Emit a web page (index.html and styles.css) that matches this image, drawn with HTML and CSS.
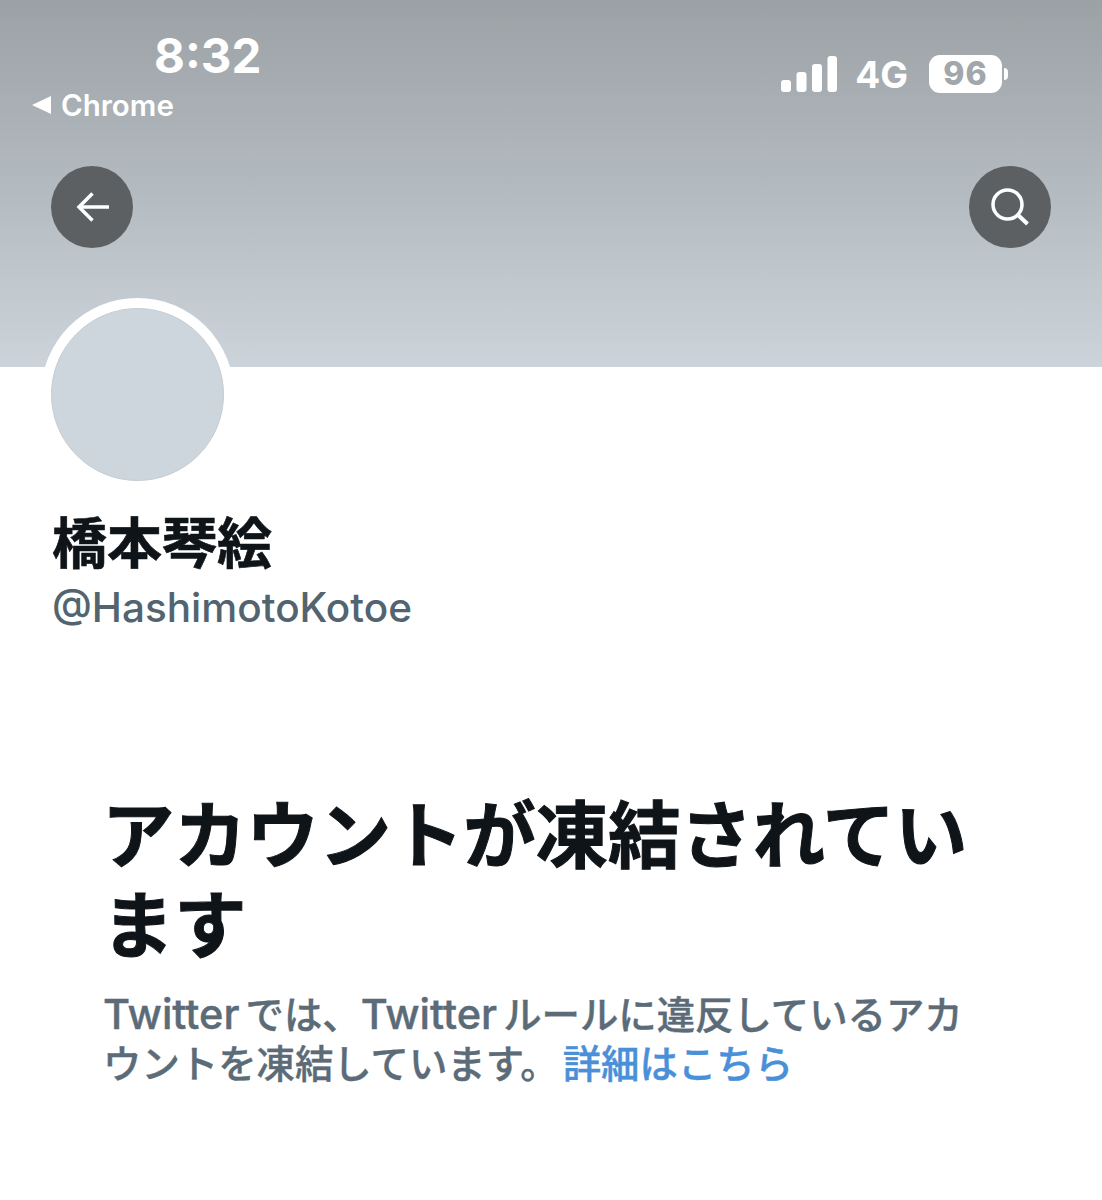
FILE: index.html
```html
<!DOCTYPE html>
<html lang="ja">
<head>
<meta charset="utf-8">
<title>橋本琴絵 (@HashimotoKotoe)</title>
<link rel="stylesheet" href="styles.css">
</head>
<body>
<header class="banner">
  <div class="status">
    <div class="status-left">
      <div class="time">8:32</div>
      <div class="return"><span class="tri"></span><span>Chrome</span></div>
    </div>
    <div class="status-right">
      <svg class="signal" width="56" height="36" viewBox="0 0 56 36"><rect x="0" y="24" width="10" height="12" rx="3"/><rect x="15.500" y="16" width="10" height="20" rx="3"/><rect x="31" y="8" width="10" height="28" rx="3"/><rect x="46.500" y="0" width="9.500" height="36" rx="3"/></svg>
      <span class="net">4G</span>
      <div class="battery"><div class="batt-body">96</div><div class="batt-cap"></div></div>
    </div>
  </div>
  <div class="nav">
    <button class="round" aria-label="戻る">
      <svg width="36" height="36" viewBox="0 0 36 36" fill="none" stroke="#fff" stroke-width="3.500"><path d="M35 18H5"/><path d="M18.500 4.500 5 18l13.500 13.500"/></svg>
    </button>
    <button class="round" aria-label="検索">
      <svg width="40" height="40" viewBox="0 0 40 40" fill="none" stroke="#fff" stroke-width="3.500"><circle cx="17.500" cy="17.500" r="14.500"/><path d="M28 28 37.500 37" stroke-width="4"/></svg>
    </button>
  </div>
</header>
<main class="profile">
  <div class="avatar-ring"><div class="avatar"></div></div>
  <h1 class="name">橋本琴絵</h1>
  <div class="handle">@HashimotoKotoe</div>
  <section class="notice">
    <h2 class="notice-title">アカウントが凍結されています</h2>
    <p class="notice-body"><span class="latin">Twitter</span>では、<span class="latin">Twitter</span>ルールに違反しているアカウントを凍結しています。<a class="link" href="#">詳細はこちら</a></p>
  </section>
</main>
</body>
</html>
```
FILE: styles.css
```css
* { box-sizing: border-box; }
html, body { margin: 0; padding: 0; background: #fff; }
body {
  width: 1102px;
  height: 1200px;
  overflow: hidden;
  font-family: "Inter", "Noto Sans CJK JP", sans-serif;
}
.banner {
  height: 367px;
  background: linear-gradient(180deg, #9ba1a5 0%, #b3babf 50%, #ccd3da 100%);
  padding: 34px 51px 0 32px;
}
.status {
  display: flex;
  justify-content: space-between;
  height: 132px;
}
.status-left { display: flex; flex-direction: column; }
.time {
  color: #fff;
  font-size: 47.500px;
  font-weight: 700;
  line-height: 44px;
  margin-left: 122px;
}
.return {
  display: flex;
  align-items: center;
  gap: 10px;
  color: #fff;
  font-size: 29.500px;
  font-weight: 600;
  line-height: 34px;
  margin-top: 10px;
}
.tri {
  width: 0;
  height: 0;
  border-style: solid;
  border-width: 9px 19px 9px 0;
  border-color: transparent #fff transparent transparent;
}
.status-right {
  display: flex;
  align-items: flex-start;
  gap: 19px;
  padding-top: 21px;
  margin-right: 43px;
  height: 70px;
}
.signal { fill: #fff; margin-top: 1px; margin-right: -1px; }
.net { color: #fff; font-size: 37px; font-weight: 700; line-height: 40px; margin-right: 2px; }
.battery { display: flex; align-items: center; gap: 2px; }
.batt-body {
  width: 73px;
  height: 38px;
  background: #fff;
  border-radius: 11px;
  color: #a1a7ab;
  font-size: 32px;
  font-weight: 800;
  line-height: 38px;
  text-align: center;
  letter-spacing: 1px;
}
.batt-cap { width: 4px; height: 12px; background: #fff; border-radius: 0 4px 4px 0; }
.nav {
  display: flex;
  justify-content: space-between;
  padding-left: 19px;
}
.round {
  width: 82px;
  height: 82px;
  border: 0;
  border-radius: 50%;
  background: #5c6063;
  padding: 0;
  display: flex;
  align-items: center;
  justify-content: center;
}
.profile { padding: 0 52px; }
.avatar-ring {
  width: 193px;
  height: 193px;
  margin: -69px 0 0 -11px;
  padding: 10px;
  border-radius: 50%;
  background: #fff;
}
.avatar {
  width: 173px;
  height: 173px;
  border-radius: 50%;
  background: #ced6dd;
  border: 1px solid #c5ccd2;
}
.name {
  margin: 15px 0 0;
  font-size: 55px;
  font-weight: 700;
  -webkit-text-stroke: 0.600px #0f1419;
  line-height: 74px;
  color: #0f1419;
}
.handle {
  font-size: 40.500px;
  line-height: 50px;
  margin-top: 3px;
  color: #536471;
  font-weight: 500;
}
.notice { padding: 0 0 0 50px; margin-top: 158px; width: 930px; }
.notice-title {
  margin: 0;
  font-size: 72.300px;
  font-weight: 700;
  -webkit-text-stroke: 1px #0f1419;
  line-height: 90px;
  color: #0f1419;
}
.notice-body {
  margin: 19px 0 0 1px;
  font-size: 38.400px;
  line-height: 49px;
  color: #5b6b78;
  font-weight: 500;
  -webkit-text-stroke: 0.400px #5b6b78;
}
.latin { font-size: 41.500px; margin-right: 6px; }
.link {
  color: #4a90d9;
  -webkit-text-stroke: 0.400px #4a90d9;
  text-decoration: none;
  margin-left: 4px;
}
```
